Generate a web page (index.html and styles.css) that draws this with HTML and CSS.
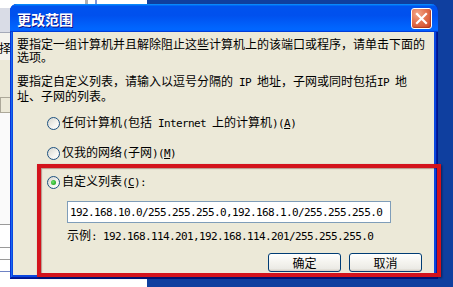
FILE: index.html
```html
<!DOCTYPE html>
<html lang="zh-CN">
<head>
<meta charset="utf-8">
<title>更改范围</title>
<link rel="stylesheet" href="styles.css">
</head>
<body>
<div class="screen">
  <div class="bgwin">
    <div class="bg-top"></div>
    <div class="bg-band"></div>
    <div class="bg-text">择</div>
    <div class="bg-beige"></div>
    <div class="bg-head"></div>
    <div class="bg-white"></div>
    <div class="bg-rows">
      <div class="bg-line"></div>
      <div class="bg-line"></div>
      <div class="bg-line blue"></div>
    </div>
  </div>

  <div class="dialog">
    <div class="titlebar">
      <span class="title">更改范围</span>
      <span class="close"><svg width="19" height="19" viewBox="0 0 19 19"><path d="M5 5 L14 14 M14 5 L5 14" stroke="#fff" stroke-width="2.2" stroke-linecap="square"/></svg></span>
    </div>
    <div class="client">
      <p class="para">要指定一组计算机并且解除阻止这些计算机上的该端口或程序，请单击下面的<br>选项。</p>
      <p class="para p2">要指定自定义列表，请输入以逗号分隔的<span class="en"> IP </span>地址，子网或同时包括<span class="en">IP </span>地<br>址、子网的列表。</p>

      <div class="opt o1"><span class="radio"></span><span class="label">任何计算机<span class="en">(</span>包括<span class="en"> Internet </span>上的计算机<span class="en">)(<u>A</u>)</span></span></div>
      <div class="opt o2"><span class="radio"></span><span class="label">仅我的网络<span class="en">(</span>子网<span class="en">)(<u>M</u>)</span></span></div>
      <div class="opt o3"><span class="radio checked"></span><span class="label">自定义列表<span class="en">(<u>C</u>):</span></span></div>

      <div class="custom">
        <input class="field" type="text" value="192.168.10.0/255.255.255.0,192.168.1.0/255.255.255.0">
        <div class="example">示例<span class="en">: 192.168.114.201,192.168.114.201/255.255.255.0</span></div>
      </div>

      <div class="buttons">
        <button class="btn">确定</button>
        <button class="btn">取消</button>
      </div>
    </div>
  </div>

  <div class="highlight"></div>
</div>
</body>
</html>
```

FILE: styles.css
```css
* { box-sizing: border-box; margin: 0; padding: 0; }
html, body { width: 453px; height: 287px; overflow: hidden; }
body {
  font-family: "Noto Sans CJK SC", sans-serif;
  font-size: 12px;
  color: #000;
}

.screen {
  position: relative;
  width: 453px;
  height: 287px;
  overflow: hidden;
  background: #0f3f9f;
}

/* window behind on the left */
.bgwin {
  position: absolute;
  left: 0;
  top: 0;
  width: 147px;
  height: 287px;
  display: flex;
  flex-direction: column;
  background: linear-gradient(to right, #fff 0 85px, #b0b0b0 85px 88px, #fff 88px 95px, #7d97d8 95px 97px, #fff 97px);
}
.bg-top { height: 8px; flex: none; }
.bg-band { height: 25px; flex: none; background: #d9dce6; border-bottom: 1px solid #a4a9b8; }
.bg-text {
  height: 27px; flex: none; background: #f4f3ee;
  font-size: 12px; line-height: 12px; padding-top: 9px; margin-left: -1px;
}
.bg-beige { height: 37px; flex: none; background: #ece9d8; }
.bg-head { height: 16px; flex: none; background: #ece9d8; border: 1px solid #aca899; }
.bg-white { height: 112px; flex: none; background: #fafafa; border-bottom: 1px solid #9a9a9a; }
.bg-rows { flex: 1; background: #fff; display: flex; flex-direction: column; gap: 11px; padding-top: 22px; }
.bg-line { height: 1px; background: #9a9a9a; }
.bg-line.blue { background: #6f83c4; }

/* dialog */
.dialog {
  position: absolute;
  left: 10px;
  top: 4px;
  width: 428px;
  height: 275px;
  display: flex;
  flex-direction: column;
  padding: 0 4px 4px 3px;
  border-radius: 7px 7px 0 0;
  background: #0b47e0;
  box-shadow: inset -1px -1px #00138c, inset 1px 1px #0831d9, inset -2px -2px #001ea0, inset 2px 2px #166aee;
}
.titlebar {
  height: 28px;
  flex: none;
  margin: 0 -4px 0 -3px;
  padding: 1px 6px 0 7px;
  display: flex;
  align-items: center;
  justify-content: space-between;
  border-radius: 7px 7px 0 0;
  background: linear-gradient(180deg, #0997ff, #0053ee 8%, #0050ee 40%, #06f 88%, #06f 93%, #005bff 95%, #003dd7 96%, #003dd7);
}
.title {
  color: #fff;
  font-weight: bold;
  font-size: 14px;
  line-height: 16px;
  text-shadow: 1px 1px #0f1089;
}
.close {
  width: 21px;
  height: 21px;
  border: 1px solid #fff;
  border-radius: 3px;
  display: flex;
  align-items: center;
  justify-content: center;
  background: radial-gradient(circle at 30% 25%, #f3a88a 0%, #e3714d 45%, #cc4424 100%);
  box-shadow: inset -1px -1px 1px rgba(120,20,0,.4);
}

.client {
  flex: 1;
  background: #ece9d8;
  padding: 5px 0 0 4px;
  display: flex;
  flex-direction: column;
}
.para { line-height: 13px; white-space: nowrap; }
.p2 { margin-top: 11px; }

.en {
  font-family: "DejaVu Sans Mono", monospace;
  font-size: 11px;
  letter-spacing: -0.62px;
}

.opt {
  height: 16px;
  display: flex;
  align-items: center;
  gap: 2px;
  padding-left: 30px;
  white-space: nowrap;
}
.o1 { margin-top: 13px; }
.o2 { margin-top: 14px; }
.o3 { margin-top: 13px; }
.label { line-height: 16px; }

.radio {
  position: relative;
  width: 13px;
  height: 13px;
  flex: none;
  border-radius: 50%;
  border: 1px solid #1c5180;
  background: linear-gradient(135deg, #d6d6cf 0%, #f4f4f0 60%, #fff 100%);
}
.radio.checked::after {
  content: "";
  position: absolute;
  left: 3px;
  top: 3px;
  width: 5px;
  height: 5px;
  border-radius: 50%;
  background: radial-gradient(circle at 40% 40%, #6fe36f 0%, #2eb32e 60%, #1f8f1f 100%);
}

.custom {
  margin-top: 11px;
  padding-left: 50px;
  display: flex;
  flex-direction: column;
}
.field {
  width: 324px;
  height: 22px;
  border: 1px solid #7f9db9;
  background: #fff;
  padding: 0 0 0 2px;
  font-family: "DejaVu Sans Mono", monospace;
  font-size: 11px;
  letter-spacing: -0.62px;
  color: #000;
  outline: none;
}
.example { margin-top: 5px; line-height: 13px; white-space: nowrap; }

.buttons {
  margin-top: 10px;
  display: flex;
  justify-content: flex-end;
  gap: 8px;
  padding-right: 12px;
}
.btn {
  width: 73px;
  height: 19px;
  border: 1px solid #003c74;
  border-radius: 3px;
  background: linear-gradient(180deg, #fff 0%, #f4f3ee 50%, #ecebe6 85%, #d6d0c5 100%);
  font-family: "Noto Sans CJK SC", sans-serif;
  font-size: 12px;
  line-height: 15px;
  color: #000;
}

/* red annotation frame drawn over the screenshot */
.highlight {
  position: absolute;
  left: 37px;
  top: 164px;
  width: 404px;
  height: 113px;
  border: 4px solid #d3131c;
  box-shadow: 1px 1px 2px rgba(0,0,0,.45), inset 1px 1px 1px rgba(80,0,0,.35);
}
```
